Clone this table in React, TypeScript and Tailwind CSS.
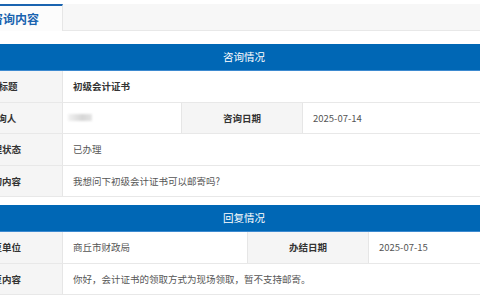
const font = { fontFamily: '"Noto Sans CJK SC", "Noto Sans", sans-serif' };

function Label({ text, w, shift }: { text: string; w: string; shift?: string }) {
  return (
    <div className={`${w} ${shift ?? ""} shrink-0 flex items-center justify-center bg-[#f5f5f5] border-r border-[#e6e6e6] text-[9.5px] font-bold text-[#333]`}>
      {text}
    </div>
  );
}

function Value({ children, w, bold }: { children: React.ReactNode; w: string; bold?: boolean }) {
  return (
    <div className={`${w} flex items-center pl-[10px] text-[9.5px] ${bold ? "font-bold text-[#333]" : "text-[#555]"}`}>
      {children}
    </div>
  );
}

function Row({ children }: { children: React.ReactNode }) {
  return <div className="flex h-[31.5px] border-b border-[#e8e8e8]">{children}</div>;
}

function Header({ text }: { text: string }) {
  return (
    <div className="h-[27px] bg-[#0067b5] border-b border-[#3d8ad0] flex items-center justify-center text-[10.5px] text-white">
      {text}
    </div>
  );
}

export default function App() {
  return (
    <div className="w-[480px] h-[300px] overflow-hidden bg-white" style={font}>
      <div className="ml-[-58px] w-[604px]">
        {/* tabs */}
        <div className="mt-[4px] flex h-[27px] bg-[#f7f7f7] border-b border-[#e8e8e8]">
          <div className="w-[121px] h-[27px] bg-[#fcfcfc] border-t-2 border-[#1a64b0] border-r border-r-[#e6e6e6] flex items-center pl-[49px] text-[12px] font-bold text-[#1a64b0]">
            咨询内容
          </div>
        </div>

        <div className="mt-[13px]">
          <Header text="咨询情况" />
          <Row>
            <Label text="标题" w="w-[121px]" shift="pl-[12px]" />
            <Value w="flex-1" bold>初级会计证书</Value>
          </Row>
          <Row>
            <Label text="咨询人" w="w-[121px]" />
            <div className="w-[119px] flex items-center pl-[5px] border-r border-[#e6e6e6]">
              <span className="inline-block w-[24px] h-[7px] bg-[linear-gradient(90deg,#f2f2f2,#d6d6d6_60%,#e4e4e4)] blur-[1px]" />
            </div>
            <Label text="咨询日期" w="w-[121px]" />
            <Value w="flex-1">2025-07-14</Value>
          </Row>
          <Row>
            <Label text="办理状态" w="w-[121px]" />
            <Value w="flex-1">已办理</Value>
          </Row>
          <Row>
            <Label text="咨询内容" w="w-[121px]" />
            <Value w="flex-1">我想问下初级会计证书可以邮寄吗?</Value>
          </Row>
        </div>

        <div className="mt-[8px]">
          <Header text="回复情况" />
          <Row>
            <Label text="回复单位" w="w-[121px]" />
            <div className="w-[185px] flex items-center pl-[10px] text-[9.5px] text-[#555] border-r border-[#e6e6e6]">
              商丘市财政局
            </div>
            <Label text="办结日期" w="w-[121px]" />
            <Value w="flex-1">2025-07-15</Value>
          </Row>
          <Row>
            <Label text="回复内容" w="w-[121px]" />
            <Value w="flex-1">你好，会计证书的领取方式为现场领取，暂不支持邮寄。</Value>
          </Row>
        </div>
      </div>
    </div>
  );
}
